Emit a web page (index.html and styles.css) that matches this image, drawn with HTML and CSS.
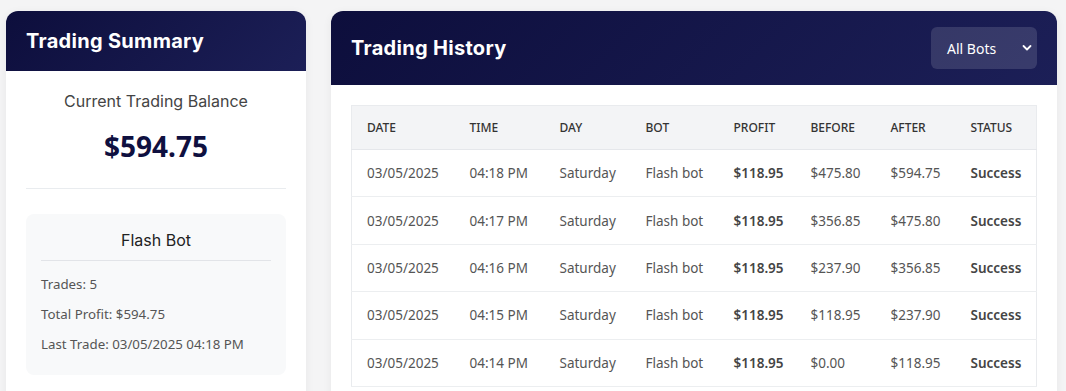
FILE: index.html
```html
<!DOCTYPE html>
<html>
<head>
<meta charset="utf-8">
<link rel="stylesheet" href="styles.css">
</head>
<body>
<div class="page">
  <section class="card summary">
    <header class="card-head head-sm">
      <h2 class="title">Trading Summary</h2>
    </header>
    <div class="summary-body">
      <div class="balance-label">Current Trading Balance</div>
      <div class="balance">$594.75</div>
      <div class="divider"></div>
      <div class="bot-box">
        <div class="bot-name">Flash Bot</div>
        <div class="bot-line">Trades: 5</div>
        <div class="bot-line">Total Profit: $594.75</div>
        <div class="bot-line">Last Trade: 03/05/2025 04:18 PM</div>
      </div>
    </div>
  </section>
  <section class="card history">
    <header class="card-head head-lg">
      <h2 class="title">Trading History</h2>
      <div class="select">
        <span>All Bots</span>
        <svg class="chev" width="10" height="8" viewBox="0 0 10 8"><path d="M1.5 2 L5 5.5 L8.5 2" fill="none" stroke="#fff" stroke-width="1.8" stroke-linecap="round" stroke-linejoin="round"/></svg>
      </div>
    </header>
    <div class="history-body">
      <table class="tbl">
        <colgroup>
          <col style="width:103px"><col style="width:90px"><col style="width:86px"><col style="width:88px"><col style="width:77px"><col style="width:80px"><col style="width:80px"><col>
        </colgroup>
        <thead>
          <tr><th>Date</th><th>Time</th><th>Day</th><th>Bot</th><th>Profit</th><th>Before</th><th>After</th><th>Status</th></tr>
        </thead>
        <tbody>
          <tr><td>03/05/2025</td><td>04:18 PM</td><td>Saturday</td><td>Flash bot</td><td class="b">$118.95</td><td>$475.80</td><td>$594.75</td><td class="b">Success</td></tr>
          <tr><td>03/05/2025</td><td>04:17 PM</td><td>Saturday</td><td>Flash bot</td><td class="b">$118.95</td><td>$356.85</td><td>$475.80</td><td class="b">Success</td></tr>
          <tr><td>03/05/2025</td><td>04:16 PM</td><td>Saturday</td><td>Flash bot</td><td class="b">$118.95</td><td>$237.90</td><td>$356.85</td><td class="b">Success</td></tr>
          <tr><td>03/05/2025</td><td>04:15 PM</td><td>Saturday</td><td>Flash bot</td><td class="b">$118.95</td><td>$118.95</td><td>$237.90</td><td class="b">Success</td></tr>
          <tr><td>03/05/2025</td><td>04:14 PM</td><td>Saturday</td><td>Flash bot</td><td class="b">$118.95</td><td>$0.00</td><td>$118.95</td><td class="b">Success</td></tr>
        </tbody>
      </table>
    </div>
  </section>
</div>
</body>
</html>
```
FILE: styles.css
```css
html, body {
  margin: 0;
  padding: 0;
  background: #f4f4f5;
  font-family: "Noto Sans", "Open Sans", sans-serif;
  overflow: hidden;
  height: 391px;
}
.page {
  display: flex;
  align-items: flex-start;
  gap: 25px;
  padding: 11px 9px 0 6px;
}
.card {
  background: #fff;
  border-radius: 12px 12px 0 0;
  box-shadow: 0 2px 10px rgba(0,0,0,0.06);
  overflow: hidden;
}
.summary { width: 300px; flex: none; height: 400px; }
.history { flex: 1; height: 400px; }
.card-head {
  background: linear-gradient(135deg, #0d0e3c 0%, #1c1f57 100%);
  display: flex;
  align-items: center;
  justify-content: space-between;
}
.head-sm { height: 60px; padding: 0 20px; }
.head-lg { height: 74px; padding: 0 20px; }
.title {
  margin: 0;
  color: #fff;
  font-family: "Inter", "Noto Sans", sans-serif;
  font-weight: 700;
  font-size: 20px;
  letter-spacing: 0.3px;
}
.head-sm .title { margin-top: -1px; }
.select {
  width: 106px;
  height: 42px;
  box-sizing: border-box;
  border-radius: 6px;
  background: rgba(255,255,255,0.13);
  color: #fff;
  font-size: 14px;
  display: flex;
  align-items: center;
  justify-content: space-between;
  padding: 0 5px 0 16px;
}
.chev { display: block; }
.summary-body { padding: 19px 20px; }
.balance-label {
  text-align: center;
  font-family: "Inter", "Noto Sans", sans-serif;
  font-size: 16px;
  color: #444;
  line-height: 22px;
}
.balance {
  text-align: center;
  font-size: 28px;
  font-weight: 700;
  color: #0f1040;
  line-height: 38px;
  margin-top: 15px;
}
.divider {
  height: 1px;
  background: #e9ecef;
  margin-top: 23px;
  margin-bottom: 25px;
}
.bot-box {
  background: #f8f9fa;
  border-radius: 8px;
  padding: 14px 15px 16px;
}
.bot-name {
  text-align: center;
  font-family: "Inter", "Noto Sans", sans-serif;
  font-size: 16px;
  color: #222;
  line-height: 24px;
  padding-bottom: 8px;
  border-bottom: 1px solid #e2e4e8;
  margin-bottom: 8px;
}
.bot-line {
  font-size: 13.3px;
  color: #555;
  line-height: 30px;
}
.history-body { padding: 20px 20px; }
.tbl {
  width: 100%;
  border-collapse: collapse;
  table-layout: fixed;
  border: 1px solid #e9ebee;
}
.tbl th {
  background: #f3f4f6;
  text-align: left;
  font-size: 12px;
  font-weight: 500;
  color: #333;
  text-transform: uppercase;
  height: 43px;
  padding: 0 0 0 15px;
  border-bottom: 1px solid #e5e7eb;
}
.tbl td {
  font-size: 13.5px;
  color: #555;
  height: 46.4px;
  padding: 0 0 0 15px;
  border-bottom: 1px solid #eceef0;
  white-space: nowrap;
}
.tbl td.b { font-weight: 600; color: #444; }
```
